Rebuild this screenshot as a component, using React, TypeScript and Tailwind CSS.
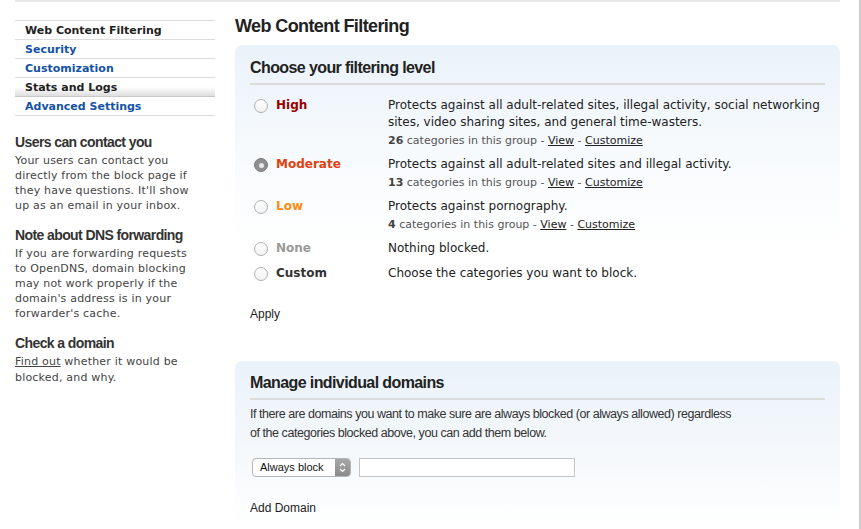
import React from "react";

const verdana = { fontFamily: '"DejaVu Sans", Verdana, sans-serif' };
const helv = { fontFamily: '"Liberation Sans", Helvetica, Arial, sans-serif' };

function Radio({ checked }: { checked?: boolean }) {
  if (checked) {
    return (
      <span className="flex h-[14px] w-[14px] items-center justify-center rounded-full bg-[#8e8e8e] border border-[#7a7a7a]">
        <span className="h-[5px] w-[5px] rounded-full bg-[#e8e8e8]" />
      </span>
    );
  }
  return (
    <span className="block h-[14px] w-[14px] rounded-full border border-[#b0b0b0] bg-gradient-to-b from-white to-[#f2f2f2]" />
  );
}

function Meta({ n }: { n: string }) {
  return (
    <div className="text-[11px] leading-[15px] text-[#555] mt-[2px]" style={verdana}>
      <b className="text-[#444]">{n}</b> categories in this group - <span className="underline text-[#222]">View</span> -{" "}
      <span className="underline text-[#222]">Customize</span>
    </div>
  );
}

function Level({
  label,
  color,
  checked,
  desc,
  meta,
  mb,
}: {
  label: string;
  color: string;
  checked?: boolean;
  desc: React.ReactNode;
  meta?: string;
  mb: string;
}) {
  return (
    <div className={`flex ${mb}`}>
      <div className="flex w-[138px] items-start pl-[4px]">
        <div className="pt-[2px]">
          <Radio checked={checked} />
        </div>
        <span className={`ml-[8px] text-[12px] leading-[17px] font-bold ${color}`} style={verdana}>
          {label}
        </span>
      </div>
      <div className="flex-1">
        <div className="text-[12px] leading-[17px] text-[#222]" style={verdana}>
          {desc}
        </div>
        {meta && <Meta n={meta} />}
      </div>
    </div>
  );
}

export default function App() {
  return (
    <div className="relative h-[529px] w-[861px] overflow-hidden bg-white">
      <div className="absolute right-0 top-0 h-full w-[2px] bg-[#cfcfcf]" />
      <div className="ml-[15px] h-[2px] w-[825px] bg-[#e8e8e8]" />
      <div className="flex pl-[15px]">
        {/* Sidebar */}
        <div className="w-[200px] shrink-0 pt-[18px]">
          <div className="border-t border-[#dcdcdc]" style={verdana}>
            <div className="h-[19px] border-b border-[#dcdcdc] pl-[10px] text-[11px] font-bold leading-[19px] text-[#222]">
              Web Content Filtering
            </div>
            <div className="h-[19px] border-b border-[#dcdcdc] pl-[10px] text-[11px] font-bold leading-[19px] text-[#1452a6]">
              Security
            </div>
            <div className="h-[19px] border-b border-[#dcdcdc] pl-[10px] text-[11px] font-bold leading-[19px] text-[#1452a6]">
              Customization
            </div>
            <div className="h-[19px] border-b border-[#c8c8c8] bg-gradient-to-b from-white from-50% to-[#dedede] pl-[10px] text-[11px] font-bold leading-[19px] text-[#222]">
              Stats and Logs
            </div>
            <div className="h-[19px] border-b border-[#dcdcdc] pl-[10px] text-[11px] font-bold leading-[19px] text-[#1452a6]">
              Advanced Settings
            </div>
          </div>

          <div className="mt-[17px] w-[178px]">
            <h3 className="text-[14px] font-bold leading-[18px] tracking-[-0.6px] text-[#333]" style={helv}>
              Users can contact you
            </h3>
            <p className="mt-[2px] text-[11px] leading-[15px] tracking-[0.2px] text-[#444]" style={verdana}>
              Your users can contact you directly from the block page if they have questions. It'll show up as an email in
              your inbox.
            </p>
          </div>
          <div className="mt-[13px] w-[178px]">
            <h3 className="text-[14px] font-bold leading-[18px] tracking-[-0.6px] text-[#333]" style={helv}>
              Note about DNS forwarding
            </h3>
            <p className="mt-[2px] text-[11px] leading-[15px] tracking-[0.2px] text-[#444]" style={verdana}>
              If you are forwarding requests to OpenDNS, domain blocking may not work properly if the domain's address is
              in your forwarder's cache.
            </p>
          </div>
          <div className="mt-[13px]">
            <h3 className="text-[14px] font-bold leading-[18px] tracking-[-0.6px] text-[#333]" style={helv}>
              Check a domain
            </h3>
            <p className="mt-[2px] text-[11px] leading-[16px] tracking-[0.2px] text-[#444]" style={verdana}>
              <span className="whitespace-nowrap">
                <span className="underline">Find out</span> whether it would be
              </span>
              <br />
              blocked, and why.
            </p>
          </div>
        </div>

        {/* Main */}
        <div className="ml-[20px] w-[605px]">
          <h1 className="mt-[13px] text-[18px] font-bold leading-[22px] tracking-[-0.6px] text-[#222]" style={helv}>
            Web Content Filtering
          </h1>

          <div className="mt-[8px] rounded-t-[7px] bg-gradient-to-b from-[#eaf2fa] via-[#f8fbfd] via-40% to-white to-70% px-[15px] pb-[14px] pt-[13px]">
            <h2
              className="border-b-2 border-[#dcdcdc] pb-[5px] text-[16px] font-bold leading-[20px] tracking-[-0.6px] text-[#222]"
              style={helv}
            >
              Choose your filtering level
            </h2>
            <div className="pt-[12px]">
              <Level
                label="High"
                color="text-[#9b0000]"
                desc="Protects against all adult-related sites, illegal activity, social networking sites, video sharing sites, and general time-wasters."
                meta="26"
                mb="mb-[8px]"
              />
              <Level
                label="Moderate"
                color="text-[#e0400f]"
                checked
                desc="Protects against all adult-related sites and illegal activity."
                meta="13"
                mb="mb-[8px]"
              />
              <Level
                label="Low"
                color="text-[#ff8a0f]"
                desc="Protects against pornography."
                meta="4"
                mb="mb-[8px]"
              />
              <Level label="None" color="text-[#999]" desc="Nothing blocked." mb="mb-[8px]" />
              <Level label="Custom" color="text-[#333]" desc="Choose the categories you want to block." mb="mb-0" />
            </div>
            <div className="mt-[24px] text-[12px] leading-[16px] text-[#222]" style={helv}>
              Apply
            </div>
          </div>

          <div className="mt-[25px] rounded-t-[7px] bg-gradient-to-b from-[#eaf2fa] via-[#f6f9fc] via-60% to-white px-[15px] pb-[10px] pt-[12px]">
            <h2
              className="border-b-2 border-[#dcdcdc] pb-[5px] text-[16px] font-bold leading-[20px] tracking-[-0.6px] text-[#222]"
              style={helv}
            >
              Manage individual domains
            </h2>
            <p
              className="mt-[5px] max-w-[490px] text-[12.5px] leading-[19px] tracking-[-0.45px] text-[#333]"
              style={helv}
            >
              If there are domains you want to make sure are always blocked (or always allowed) regardless of the
              categories blocked above, you can add them below.
            </p>
            <div className="mt-[15px] flex items-center pl-[2px]">
              <div className="flex h-[19px] w-[99px] items-stretch overflow-hidden rounded-[4px] border border-[#b5b5b5] bg-white">
                <span className="flex-1 pl-[7px] text-[11px] leading-[17px] text-[#111]" style={helv}>
                  Always block
                </span>
                <span className="flex w-[15px] items-center justify-center bg-gradient-to-b from-[#a8a8a8] to-[#8a8a8a]">
                  <svg width="7" height="11" viewBox="0 0 7 11">
                    <path d="M1 4 L3.5 1.5 L6 4" fill="none" stroke="#fff" strokeWidth="1.1" />
                    <path d="M1 7 L3.5 9.5 L6 7" fill="none" stroke="#fff" strokeWidth="1.1" />
                  </svg>
                </span>
              </div>
              <div className="ml-[8px] h-[19px] w-[216px] border border-[#c4c4c4] bg-white" />
            </div>
            <div className="mt-[23px] text-[12px] leading-[16px] text-[#222]" style={helv}>
              Add Domain
            </div>
          </div>
        </div>
      </div>
    </div>
  );
}
